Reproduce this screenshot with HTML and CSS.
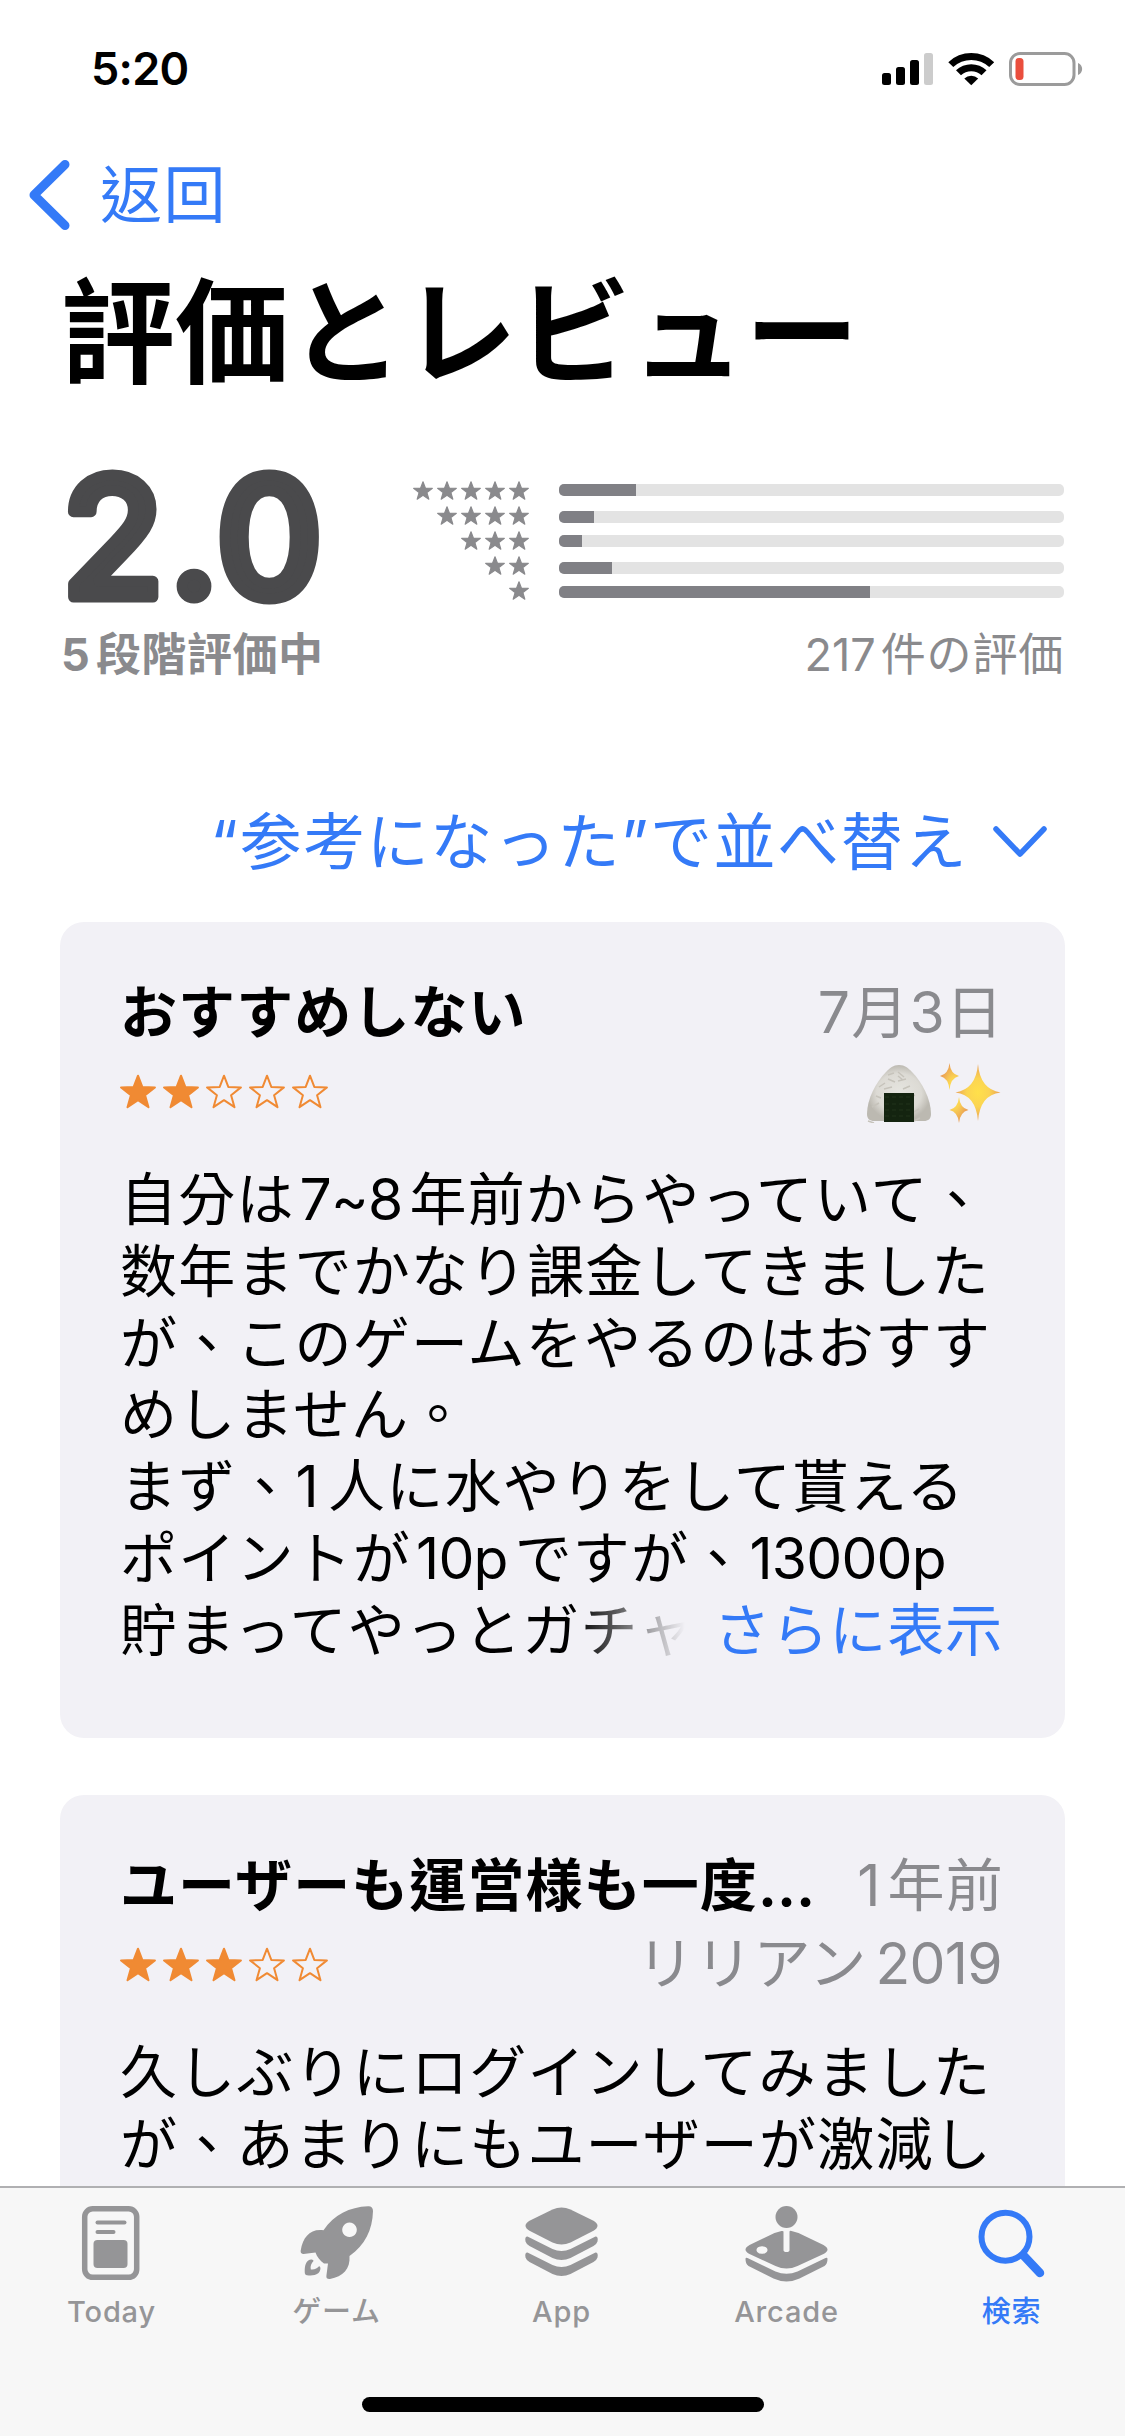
FILE: index.html
```
<!DOCTYPE html>
<html lang="zh-Hant">
<head>
<meta charset="utf-8">
<title>評価とレビュー</title>
<link rel="stylesheet" href="styles.css">
</head>
<body>
<svg class="defs" width="0" height="0" aria-hidden="true">
  <symbol id="star" viewBox="0 0 36 34"><path d="M18 1.200 L22.3 12.400 L34.900 12.900 L25.1 20.700 L28.500 32.700 L18 25.700 L7.500 32.700 L10.900 20.700 L1.100 12.900 L13.700 12.400 Z" stroke-width="2" stroke-linejoin="round"/></symbol>
</svg>
<div class="screen">
  <header class="status">
    <span class="clock">5:20</span>
    <svg class="status-icons" width="202" height="36" viewBox="0 0 202 36">
      <rect x="1" y="22" width="9" height="12" rx="2.500"/>
      <rect x="15" y="16" width="9" height="18" rx="2.500"/>
      <rect x="29" y="9" width="9" height="25" rx="2.500"/>
      <rect x="43" y="2" width="9" height="32" rx="2.500" fill="#ccc"/>
      <path d="M67.300 11.200a33 33 0 0 1 45.900 0l-5 4.900a26 26 0 0 0-35.900 0z"/>
      <path d="M75 19.300a22 22 0 0 1 30.500 0l-5 5a15 15 0 0 0-20.500 0z"/>
      <path d="M83.300 27.400a10.500 10.500 0 0 1 13.900 0l-6.950 6.900z"/>
      <rect x="129.500" y="2.500" width="63.500" height="31" rx="9.500" fill="none" stroke="#9b9b9b" stroke-width="3"/>
      <rect x="134.500" y="7" width="8" height="22" rx="3.500" fill="#ea4e3d"/>
      <path d="M197 12c5.500 2 5.500 10 0 12z" fill="#9b9b9b"/>
    </svg>
  </header>

  <nav class="back">
    <svg width="44" height="72" viewBox="0 0 44 72"><path d="M38 5.500 7 36l31 30.500" fill="none" stroke="#347af7" stroke-width="9" stroke-linecap="round" stroke-linejoin="round"/></svg>
    <span>返回</span>
  </nav>

  <h1 class="title">評価とレビュー</h1>

  <section class="summary">
    <div class="score">
      <svg class="score-value" width="262" height="150" viewBox="0 0 262 150"><text x="1 108 155" y="135">2.0</text></svg>
      <span class="score-label"><span class="num">5</span>段階評価中</span>
    </div>
    <div class="chart">
      <div class="stars-col">
        <div><svg><use href="#star"/></svg><svg><use href="#star"/></svg><svg><use href="#star"/></svg><svg><use href="#star"/></svg><svg><use href="#star"/></svg></div>
        <div><svg><use href="#star"/></svg><svg><use href="#star"/></svg><svg><use href="#star"/></svg><svg><use href="#star"/></svg></div>
        <div><svg><use href="#star"/></svg><svg><use href="#star"/></svg><svg><use href="#star"/></svg></div>
        <div><svg><use href="#star"/></svg><svg><use href="#star"/></svg></div>
        <div><svg><use href="#star"/></svg></div>
      </div>
      <div class="bars">
        <div class="bar"><i style="width:15.2%"></i></div>
        <div class="bar drop"><i style="width:7%"></i></div>
        <div class="bar"><i style="width:4.6%"></i></div>
        <div class="bar drop"><i style="width:10.500%"></i></div>
        <div class="bar"><i style="width:61.500%"></i></div>
      </div>
      <span class="count"><span class="num">217</span>件の評価</span>
    </div>
  </section>

  <div class="sort">
    <span>“参考になった”で並べ替え</span>
    <svg width="56" height="34" viewBox="0 0 56 34"><path d="M4 4l24 25L52 4" fill="none" stroke="#347af7" stroke-width="5.500" stroke-linecap="round" stroke-linejoin="round"/></svg>
  </div>

  <main class="reviews">
    <article class="card">
      <div class="row"><h2>おすすめしない</h2><span class="meta">7月3日</span></div>
      <div class="row second">
        <div class="rating"><svg><use href="#star"/></svg><svg><use href="#star"/></svg><svg class="o"><use href="#star"/></svg><svg class="o"><use href="#star"/></svg><svg class="o"><use href="#star"/></svg></div>
        <svg class="emoji" width="136" height="62" viewBox="0 0 136 62">
          <defs>
            <radialGradient id="rice"><stop offset="0" stop-color="#e6e5e0"/><stop offset=".7" stop-color="#dcdad4"/><stop offset="1" stop-color="#bcb9b1"/></radialGradient>
            <radialGradient id="gold"><stop offset="0" stop-color="#ffe04a"/><stop offset=".5" stop-color="#fbd452"/><stop offset="1" stop-color="#eaa055"/></radialGradient>
          </defs>
          <path d="M34 4c6 0 9 3 13 7 10 10 19 27 19 42 0 5-3 7-7 7H9c-4 0-7-2-7-7C2 38 11 21 21 11c4-4 7-7 13-7z" fill="url(#rice)"/>
          <path d="M14 26l6-4m-9 13 5 2m-9 9 7-4m9-24 7 3m3-10 6 5m-6 4 8-2m4 7-7 3m12 6-6 3m10 11-5 3m-46 9 6 2m40-2 6-3m-36-29 8-2m-4-12 6-2m4 3 5 4" stroke="#c6c3bb" stroke-width="1.500" fill="none"/>
          <path d="M19 32h30v29H19z" fill="#142410"/><path d="M20 36h27m-27 7h27m-27 6h27m-27 6h27" stroke="#20331b" stroke-width="1" stroke-dasharray="4 3"/>
          <path d="M113 3q2 25 22.500 28.500Q115 34 113 60q-2-26-22.500-28.500Q111 28 113 3z" fill="url(#gold)"/>
          <path d="M84.500 2q1 11 9.500 13-8.500 2-9.500 14-1-12-9.500-14 8.500-2 9.500-13zM94 36q1 11 9.500 13-8.500 2-9.500 13-1-11-9.500-13 8.500-2 9.500-13z" fill="url(#gold)"/>
        </svg>
      </div>
      <div class="body">
        <p>自分は<span class="num">7~8</span>年前からやっていて、</p>
        <p>数年までかなり課金してきました</p>
        <p>が、このゲームをやるのはおすす</p>
        <p>めしません。</p>
        <p>まず、<span class="one">1</span>人に水やりをして貰える</p>
        <p>ポイントが<span class="num">10p</span>ですが、<span class="tail">13000p</span></p>
        <div class="more-row"><p class="fade">貯まってやっとガチャ</p><a class="more">さらに表示</a></div>
      </div>
    </article>
    <article class="card">
      <div class="row"><h2>ユーザーも運営様も一度<span class="dots">…</span></h2><span class="meta"><span class="one">1</span>年前</span></div>
      <div class="row second">
        <div class="rating"><svg><use href="#star"/></svg><svg><use href="#star"/></svg><svg><use href="#star"/></svg><svg class="o"><use href="#star"/></svg><svg class="o"><use href="#star"/></svg></div>
        <span class="meta name">リリアン<span class="year">2019</span></span>
      </div>
      <div class="body">
        <p>久しぶりにログインしてみました</p>
        <p>が、あまりにもユーザーが激減し</p>
      </div>
    </article>
  </main>

  <footer class="tabbar">
    <div class="tabs">
      <div class="tab">
        <svg width="84" height="80" viewBox="0 0 84 80"><rect x="14.700" y="5.800" width="52" height="68.500" rx="8" fill="none" stroke="#959597" stroke-width="5.500"/><rect x="25.500" y="17.500" width="31" height="4" rx="2"/><rect x="25.500" y="27" width="20" height="4" rx="2"/><rect x="23.500" y="37" width="34" height="28" rx="4"/></svg>
        <span>Today</span>
      </div>
      <div class="tab">
        <svg width="84" height="80" viewBox="0 0 84 80"><path fill-rule="evenodd" d="M73 3.300c3-.3 5 1.500 5 4.700-.5 19-8 34-23.500 45 1 13-6.500 20.500-19.500 23-2.500.3-4-1-3.600-3.300L33 60.500h-4c-4-3-7-6.500-8.500-11L8.500 51c-2 0-3.200-1.200-2.800-3.500C8 34 15 25.500 28.500 27.200 39 12 54.500 4 73 3.300zM54.500 19.500a7.300 7.300 0 1 0 .01 0z"/><path d="M18.500 58c-2 2-3.500 5-2.700 8.500 3.700.5 6.500-1 8.200-3.200 2.500.5 1.500 5-.8 7-3 2.300-7 2.500-11.200 2-1.500-.3-2-1-2.200-2.300-.3-5 .2-10 3.500-12.500 2-1.500 5-1.200 5.200.5z"/></svg>
        <span class="cjk">ゲーム</span>
      </div>
      <div class="tab">
        <svg width="84" height="80" viewBox="0 0 84 80"><path d="M32.500 6.500q9-4 18 0l23 11.200q8 5 0 10L50.500 39.500q-9 4-18 0L9.500 27.700q-8-5 0-10z"/><path d="M7.500 33.500 32.500 46q9 4 18 0l25-12.500q3 0 2 5-1 3-4 4.500L50.500 55q-9 4-18 0L9.500 43q-3-1.500-4-4.500-1-5 2-5z"/><path d="M7.500 49.500 32.500 62q9 4 18 0l25-12.500q3 0 2 5-1 3-4 4.500L50.500 71q-9 4-18 0L9.500 59q-3-1.500-4-4.500-1-5 2-5z"/></svg>
        <span>App</span>
      </div>
      <div class="tab">
        <svg width="84" height="80" viewBox="0 0 84 80"><circle cx="41.500" cy="14" r="11"/><path fill-rule="evenodd" d="M36.500 28q1.500-.4 2 .500V47q0 2 3 2t3-2V28.500q.5-1 2-.5l7 2L78.500 42q8 4.500 0 9L52.500 63q-11 5-22 0L4.500 51q-8-4.500 0-9l25-12zM17 43.200a5.500 3.800 0 1 0 .01 0z"/><path d="M.5 56q0-2 2-1l28 13.500q11 4.500 22 0L80.500 55q2-1 2 1 0 5-3 7L54.500 75.500q-13 6-26 0L3.500 63q-3-2-3-7z"/></svg>
        <span>Arcade</span>
      </div>
      <div class="tab active">
        <svg width="84" height="80" viewBox="0 0 84 80"><circle cx="35.500" cy="33.700" r="24" fill="none" stroke="#347af7" stroke-width="6"/><path d="M54 53l16 17" stroke="#347af7" stroke-width="8.500" stroke-linecap="round"/></svg>
        <span class="cjk">検索</span>
      </div>
    </div>
    <div class="home"></div>
  </footer>
</div>
</body>
</html>
```
FILE: styles.css
```
* { box-sizing: border-box; margin: 0; padding: 0; }
body {
  background: #fff;
  color: #000;
  font-family: Inter, "Noto Sans CJK TC", sans-serif;
}
.defs { position: absolute; }
.screen {
  width: 1125px;
  height: 2436px;
  overflow: hidden;
  display: flex;
  flex-direction: column;
}
p, span, h1, h2, a { white-space: nowrap; }

.status {
  height: 132px;
  padding: 51px 42px 0 91px;
  display: flex;
  justify-content: space-between;
  align-items: flex-start;
  flex: none;
}
.clock { font-size: 45px; line-height: 36px; font-weight: 600; letter-spacing: -0.7px; }

.back {
  height: 126px;
  padding-left: 27px;
  display: flex;
  align-items: center;
  gap: 29px;
  flex: none;
  color: #347af7;
  font-size: 62px;
  letter-spacing: 1.5px;
}
.back span { padding-bottom: 9px; }
.title {
  height: 150px;
  line-height: 150px;
  padding-left: 61px;
  font-size: 114px;
  font-weight: 700;
  flex: none;
}

.summary {
  height: 292px;
  padding: 54px 60px 0 61px;
  display: flex;
  justify-content: space-between;
  flex: none;
  color: #8a8a8d;
}
.score { display: flex; flex-direction: column; }
.score-value { display: block; overflow: visible; }
.score-value text {
  font-family: Inter, sans-serif;
  font-size: 165px;
  font-weight: 500;
  fill: #4a4a4c;
  stroke: #4a4a4c;
  stroke-width: 11px;
  stroke-linejoin: round;
}
.score-label { font-size: 45px; line-height: 60px; margin-top: 13px; font-weight: 700; letter-spacing: 0.5px; }
.score-label .num { margin-right: 7px; }
.chart {
  display: grid;
  grid-template-columns: 121px 505px;
  grid-template-rows: 125px 60px;
  column-gap: 25px;
  row-gap: 21px;
  padding: 17px 1px 0 0;
}
.stars-col div { height: 25px; display: flex; justify-content: flex-end; align-items: center; gap: 4px; }
.stars-col { padding-right: 5px; margin-top: -1px; }
.stars-col svg { width: 20px; height: 19px; fill: #8a8a8d; stroke: #8a8a8d; }
.bars { padding-top: 5px; }
.bar { height: 12px; margin-bottom: 12px; border-radius: 5px; background: #e3e3e3; overflow: hidden; }
.bar.drop { margin-top: 15px; }
.bar i { display: block; height: 100%; background: #808085; }
.count { grid-column: 1 / 3; text-align: right; font-size: 45px; line-height: 60px; letter-spacing: 0.8px; }
.count .num { margin-right: 5px; letter-spacing: 0; }

.sort {
  height: 222px;
  padding: 60px 77px 0 0;
  display: flex;
  justify-content: flex-end;
  gap: 24px;
  flex: none;
  color: #347af7;
  font-size: 62px;
  line-height: 166px;
  letter-spacing: 1.6px;
}
.sort svg { margin-top: 65px; }

.reviews { padding: 0 60px; display: flex; flex-direction: column; gap: 57px; height: 1264px; overflow: hidden; flex: none; }
.card { height: 816px; border-radius: 24px; background: #f2f1f6; padding: 55px 61px 0 60px; flex: none; }
.row { height: 72px; display: flex; justify-content: space-between; align-items: center; font-size: 57px; line-height: 72px; letter-spacing: 1.2px; }
.row h2 { font-size: 57px; font-weight: 700; letter-spacing: 1.1px; }
.meta { color: #8a8a8e; }
.name { margin-right: 2px; }
.year { margin-left: 8px; letter-spacing: -0.7px; }
.row.second { height: 76px; padding-top: 8px; }
.rating { display: flex; gap: 7px; }
.rating svg { width: 36px; height: 35px; fill: #f08a33; stroke: #f08a33; }
.rating svg.o { fill: none; }
.emoji { margin: 1px 3px 0 0; }
.body { margin-top: 39px; font-size: 57px; line-height: 71.800px; letter-spacing: 1.2px; }
.body p { height: 71.800px; }
.num { letter-spacing: -0.8px; }
.tail { margin-left: 2px; letter-spacing: -0.8px; }
.body .num { margin: 0 7px 0 5px; }
.one { margin-right: 6px; }
.body .one { margin: 0 8px 0 1px; }
.more-row { display: flex; justify-content: space-between; }
.fade { width: 584px; -webkit-mask-image: linear-gradient(90deg, #000 455px, transparent 565px); mask-image: linear-gradient(90deg, #000 455px, transparent 565px); }
.more { color: #347af7; margin-right: 1px; letter-spacing: 0.9px; }

.tabbar { height: 250px; border-top: 2px solid #b0b0b2; background: #f7f7f7; flex: none; display: flex; flex-direction: column; align-items: center; }
.tabs { width: 100%; height: 209px; display: flex; }
.tab { flex: 1; padding: 15px 2px 0 0; display: flex; flex-direction: column; align-items: center; color: #959597; fill: #959597; font-size: 29px; font-weight: 500; letter-spacing: 0.8px; line-height: 44px; }
.tab span { margin-top: 7px; }
.tab.active { color: #347af7; }
.home { width: 402px; height: 15px; border-radius: 8px; background: #000; }
```
